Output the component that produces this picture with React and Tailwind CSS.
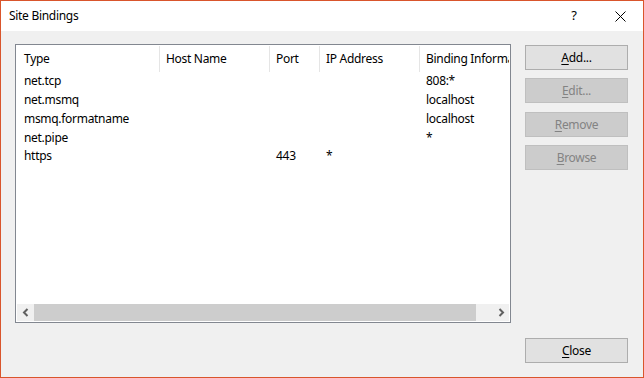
import React from 'react'

const rows = [
  { type: 'net.tcp', host: '', port: '', ip: '', info: '808:*' },
  { type: 'net.msmq', host: '', port: '', ip: '', info: 'localhost' },
  { type: 'msmq.formatname', host: '', port: '', ip: '', info: 'localhost' },
  { type: 'net.pipe', host: '', port: '', ip: '', info: '*' },
  { type: 'https', host: '', port: '443', ip: '*', info: '' },
]

function DlgButton({ label, accel, disabled, className = '' }) {
  const rest = label.slice(1)
  return (
    <button
      className={
        (disabled
          ? 'h-[25px] w-[103px] border border-[#bfbfbf] bg-[#cccccc] text-[#838383] text-[12px] leading-none '
          : 'h-[25px] w-[103px] border border-[#adadad] bg-[#e1e1e1] text-black text-[12px] leading-none ') + className
      }
    >
      <span className="underline underline-offset-2">{accel}</span>
      {rest}
    </button>
  )
}

function Chevron({ dir }) {
  return (
    <svg width="8" height="9" viewBox="0 0 8 9">
      {dir === 'left' ? (
        <polyline points="5.5,1 2,4.5 5.5,8" fill="none" stroke="#606060" strokeWidth="2" />
      ) : (
        <polyline points="2.5,1 6,4.5 2.5,8" fill="none" stroke="#606060" strokeWidth="2" />
      )}
    </svg>
  )
}

export default function App() {
  const cols = 'grid grid-cols-[143px_110px_50px_100px_1fr]'

  return (
    <div
      className="w-[644px] h-[378px] border border-[#d9552c] flex flex-col bg-[#f0f0f0] text-[12px] text-black overflow-hidden tracking-[-0.3px]"
      style={{ fontFamily: '"Noto Sans", "Open Sans", sans-serif' }}
    >
      {/* title bar */}
      <div className="h-[30px] bg-white flex items-center pl-[8px]">
        <span className="flex-1 text-[12px]">Site Bindings</span>
        <span className="w-[46px] text-center text-[13px]">?</span>
        <div className="w-[46px] flex justify-center">
          <svg width="11" height="11" viewBox="0 0 11 11">
            <path d="M0.5 0.5 L10.5 10.5 M10.5 0.5 L0.5 10.5" stroke="#000" strokeWidth="1" />
          </svg>
        </div>
      </div>

      {/* body */}
      <div className="flex-1 flex pt-[13px] pl-[14px] pr-[14px] pb-[14px] gap-[14px]">
        <div className="w-[496px] h-[279px] border border-[#828790] bg-white p-[1px] flex flex-col">
          <div className={cols + ' h-[26px] items-stretch'}>
            {['Type', 'Host Name', 'Port', 'IP Address', 'Binding Informa'].map((h, i) => (
              <div
                key={h}
                className={
                  (i < 4 ? 'border-r border-[#e5e5e5] ' : '') +
                  (i === 0 ? 'pl-[7px] ' : 'pl-[6px] ') +
                  'flex items-center whitespace-nowrap overflow-hidden pb-[1px]'
                }
              >
                {h}
              </div>
            ))}
          </div>
          <div className="flex-1 flex flex-col">
            {rows.map((r) => (
              <div key={r.type} className={cols + ' h-[18.75px] items-center whitespace-nowrap'}>
                <div className="pl-[7px]">{r.type}</div>
                <div className="pl-[6px]">{r.host}</div>
                <div className="pl-[6px]">{r.port}</div>
                <div className="pl-[6px]">{r.ip}</div>
                <div className="pl-[6px]">{r.info}</div>
              </div>
            ))}
          </div>
          {/* horizontal scrollbar */}
          <div className="h-[17px] bg-[#f0f0f0] flex">
            <div className="w-[17px] flex items-center justify-center">
              <Chevron dir="left" />
            </div>
            <div className="w-[442px] bg-[#cdcdcd]" />
            <div className="flex-1" />
            <div className="w-[17px] flex items-center justify-center">
              <Chevron dir="right" />
            </div>
          </div>
        </div>

        <div className="flex flex-col justify-between pt-[1px]">
          <div className="flex flex-col">
            <DlgButton label="Add..." accel="A" />
            <DlgButton label="Edit..." accel="E" disabled className="mt-[8px]" />
            <DlgButton label="Remove" accel="R" disabled className="mt-[9px]" />
            <DlgButton label="Browse" accel="B" disabled className="mt-[8px]" />
          </div>
          <DlgButton label="Close" accel="C" />
        </div>
      </div>
    </div>
  )
}
